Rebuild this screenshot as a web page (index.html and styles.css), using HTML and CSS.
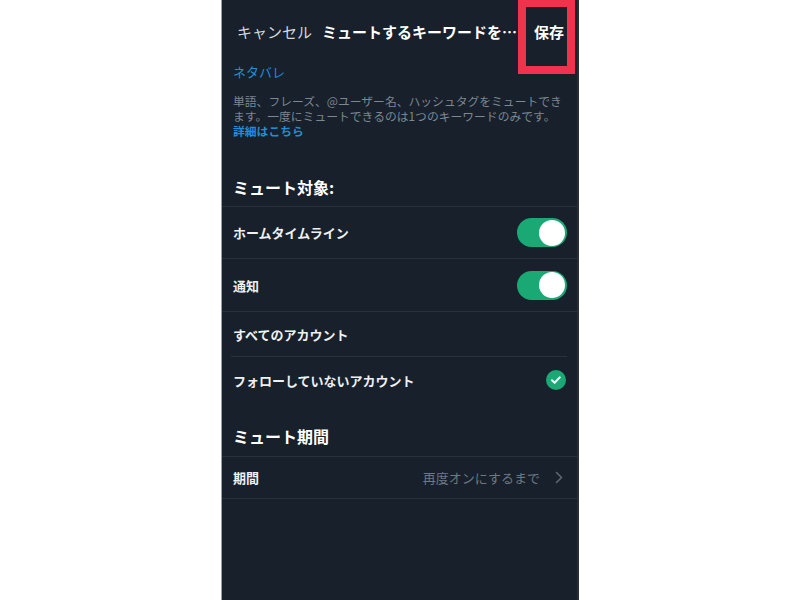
FILE: index.html
```html
<!DOCTYPE html>
<html lang="ja">
<head>
<meta charset="utf-8">
<link rel="stylesheet" href="styles.css">
</head>
<body>
<div class="phone">
  <header class="topbar">
    <span class="cancel">キャンセル</span>
    <span class="title">ミュートするキーワードを…</span>
    <span class="save">保存</span>
    <span class="highlight"></span>
  </header>
  <div class="keyword">ネタバレ</div>
  <div class="descwrap">
    <p class="desc">単語、フレーズ、@ユーザー名、ハッシュタグをミュートできます。一度にミュートできるのは1つのキーワードのみです。</p>
    <div class="link">詳細はこちら</div>
  </div>
  <h2 class="heading first">ミュート対象:</h2>
  <div class="row r1">
    <span class="label">ホームタイムライン</span>
    <span class="toggle"><span class="knob"></span></span>
  </div>
  <div class="row r2">
    <span class="label">通知</span>
    <span class="toggle"><span class="knob"></span></span>
  </div>
  <div class="row r3 inset">
    <span class="label">すべてのアカウント</span>
  </div>
  <div class="row r4 inset">
    <span class="label">フォローしていないアカウント</span>
    <span class="check"><svg width="20" height="20" viewBox="0 0 20 20"><circle cx="10" cy="10" r="10" fill="#1aa974"/><path d="M6 10.3l2.6 2.5 5.2-5.4" fill="none" stroke="#fff" stroke-width="2" stroke-linecap="round" stroke-linejoin="round"/></svg></span>
  </div>
  <h2 class="heading second">ミュート期間</h2>
  <div class="row r5">
    <span class="label">期間</span>
    <span class="value">再度オンにするまで</span>
    <svg class="chev" width="8" height="13" viewBox="0 0 8 13"><path d="M1.5 1.5l5 5-5 5" fill="none" stroke="#5c6772" stroke-width="1.6" stroke-linecap="round" stroke-linejoin="round"/></svg>
  </div>
  <div class="rest"></div>
</div>
</body>
</html>
```

FILE: styles.css
```css
html, body {
  margin: 0;
  padding: 0;
  background: #ffffff;
}
body {
  font-family: "Noto Sans CJK JP", "Noto Sans", sans-serif;
}
.phone {
  width: 358px;
  height: 600px;
  margin: 0 auto;
  background: #17202b;
  border-left: 1px solid #9aa0a6;
  border-right: 2px solid #2a2f33;
  box-sizing: border-box;
  overflow: hidden;
  display: flex;
  flex-direction: column;
  position: relative;
}
.topbar {
  height: 62px;
  display: flex;
  align-items: center;
  padding: 0 0 0 15px;
  position: relative;
}
.cancel {
  font-size: 15px;
  color: #d4d7da;
  width: 85px;
}
.title {
  font-size: 15px;
  font-weight: 700;
  color: #ffffff;
  width: 212px;
}
.save {
  font-size: 15px;
  font-weight: 700;
  color: #ffffff;
}
.highlight {
  position: absolute;
  left: 296px;
  top: -1px;
  width: 57px;
  height: 75px;
  border: 8px solid #f0334c;
  box-sizing: border-box;
}
.keyword {
  font-size: 13px;
  line-height: 20px;
  color: #1d8fd6;
  padding-left: 11px;
}
.descwrap {
  margin-top: 11px;
  padding: 0 10px 0 11px;
}
.desc {
  margin: 0;
  font-size: 11.8px;
  line-height: 15px;
  color: #7c8792;
}
.link {
  font-size: 11.8px;
  line-height: 15px;
  height: 15px;
  color: #1d8fd6;
  font-weight: 700;
}
.heading {
  margin: 0;
  font-size: 16px;
  font-weight: 700;
  color: #ffffff;
  line-height: 20px;
  padding-left: 11px;
  border-bottom: 1px solid #28323d;
}
.heading.first {
  padding-top: 39px;
  padding-bottom: 9px;
}
.heading.second {
  padding-top: 23px;
  padding-bottom: 10px;
}
.row {
  display: flex;
  align-items: center;
  padding: 0 10px 0 11px;
  position: relative;
  border-bottom: 1px solid #28323d;
}
.row.inset {
  border-bottom: none;
}
.row.inset::before {
  content: "";
  position: absolute;
  left: 9px;
  right: 10px;
  top: -1px;
  height: 1px;
  background: #28323d;
}
.r1 { height: 51px; }
.r2 { height: 52px; }
.r3 { height: 45px; }
.r4 { height: 46px; border-bottom: 1px solid #28323d; }
.r5 { height: 41px; }
.label {
  font-size: 13px;
  font-weight: 700;
  color: #eef0f2;
  flex: 1;
}
.toggle {
  width: 50px;
  height: 29px;
  border-radius: 15px;
  background: #1aa974;
  display: flex;
  align-items: center;
  justify-content: flex-end;
  padding-right: 2px;
  box-sizing: border-box;
}
.knob {
  width: 26px;
  height: 26px;
  border-radius: 50%;
  background: #ffffff;
}
.check {
  display: flex;
  margin-right: 1px;
}
.value {
  font-size: 13px;
  color: #6d7882;
  margin-right: 15px;
}
.chev {
  margin-right: 4px;
}
.rest {
  flex: 1;
}
```
